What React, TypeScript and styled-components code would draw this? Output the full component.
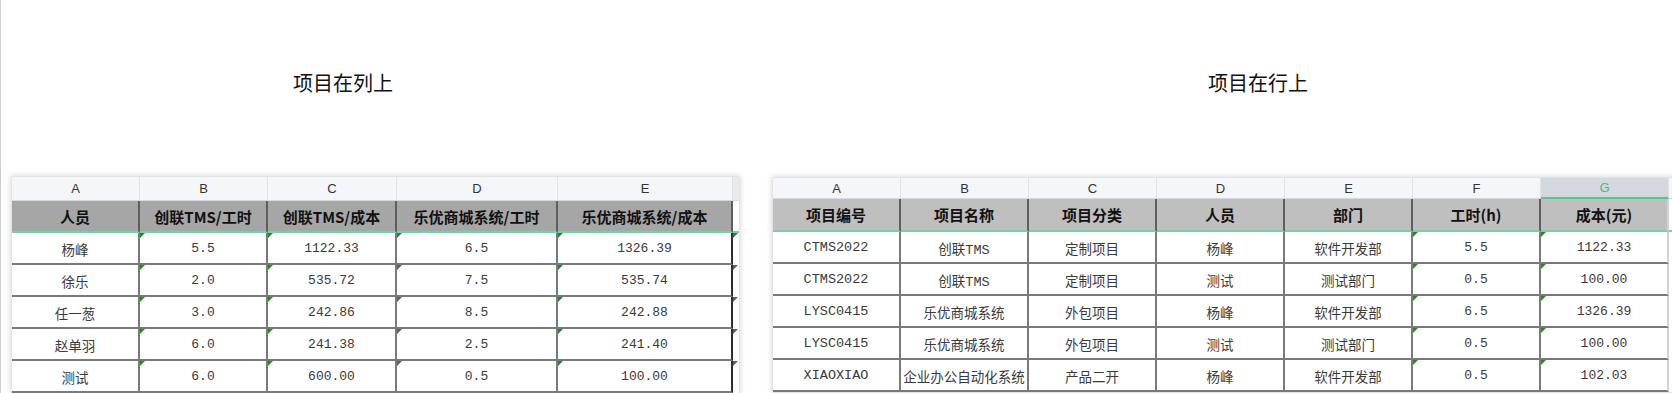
import React from 'react';
import styled, { createGlobalStyle, css } from 'styled-components';

const GlobalStyle = createGlobalStyle`
  html, body {
    margin: 0;
    padding: 0;
    background: #fff;
  }
  body {
    font-family: "Noto Sans CJK SC", "Noto Sans", sans-serif;
  }
`;

const Page = styled.div`
  display: flex;
  height: 393px;
  overflow: hidden;
  border-left: 1px solid #cfcfcf;
`;

const Section = styled.section<{ $width?: number }>`
  display: flex;
  flex-direction: column;
  flex: ${(p) => (p.$width ? `0 0 ${p.$width}px` : '1 1 auto')};
  min-width: 0;
`;

const Title = styled.h2<{ $indent: number }>`
  flex-shrink: 0;
  margin: 0;
  height: 176px;
  box-sizing: border-box;
  padding: 72px 0 0 ${(p) => p.$indent}px;
  font-size: 20px;
  line-height: 22px;
  font-weight: 400;
  color: #111;
`;

const Panel = styled.div<{ $left: number; $top: number }>`
  flex-shrink: 0;
  margin: ${(p) => p.$top}px 0 0 ${(p) => p.$left}px;
  align-self: flex-start;
  background: #fff;
  border: 1px solid #e3e3e3;
  border-radius: 2px;
  box-shadow: 0 0 5px 1px rgba(0, 0, 0, 0.13);
`;

const Sheet = styled.div<{ $cols: string }>`
  display: grid;
  grid-template-columns: ${(p) => p.$cols};
`;

const Letter = styled.div<{ $h: number; $active?: boolean; $blank?: boolean }>`
  height: ${(p) => p.$h}px;
  box-sizing: border-box;
  display: flex;
  align-items: center;
  justify-content: center;
  background: #f4f6f9;
  border-right: 1px solid #dfe2e7;
  border-bottom: 1px solid #d6d9de;
  font-family: "Liberation Sans", Arial, sans-serif;
  font-size: 13px;
  color: #333;
  ${(p) =>
    p.$active &&
    css`
      background: #d3d8df;
      color: #3cc184;
      border-bottom: 2px solid #4cc98e;
    `}
  ${(p) =>
    p.$blank &&
    css`
      background: #e9eaec;
      border-right: none;
    `}
`;

const Head = styled.div<{ $h: number; $bg: string; $blank?: boolean; $edge?: string }>`
  height: ${(p) => p.$h}px;
  box-sizing: border-box;
  display: flex;
  align-items: center;
  justify-content: center;
  background: ${(p) => (p.$blank ? '#fff' : p.$bg)};
  border-right: ${(p) => (p.$blank ? 'none' : `2px solid ${p.$edge ?? '#5e5e5e'}`)};
  border-bottom: 2px solid #72d3a6;
  font-size: 15px;
  font-weight: 700;
  color: #111;
  white-space: nowrap;
`;

const Cell = styled.div<{ $num?: boolean; $flag?: boolean; $blank?: boolean; $edge?: string }>`
  position: relative;
  height: 32px;
  box-sizing: border-box;
  display: flex;
  align-items: center;
  justify-content: center;
  padding-top: 1px;
  border-right: 2px solid ${(p) => p.$edge ?? '#7a7a7a'};
  border-bottom: 2px solid #7a7a7a;
  font-family: "Liberation Mono", "Noto Sans CJK SC", monospace;
  font-size: ${(p) => (p.$num ? '13px' : '13.5px')};
  color: #3a3a3a;
  white-space: nowrap;
  ${(p) =>
    p.$blank &&
    css`
      border-right: none;
      border-bottom: none;
    `}
  ${(p) =>
    p.$flag &&
    css`
      &::before {
        content: '';
        position: absolute;
        top: 0;
        left: 0;
        border-top: 5px solid #1c8f1c;
        border-right: 5px solid transparent;
      }
    `}
`;

const isNum = (v: string) => /^\d+\.\d+$/.test(v);

const leftCols = ['A', 'B', 'C', 'D', 'E'];
const leftHead = ['人员', '创联TMS/工时', '创联TMS/成本', '乐优商城系统/工时', '乐优商城系统/成本'];
const leftRows = [
  ['杨峰', '5.5', '1122.33', '6.5', '1326.39'],
  ['徐乐', '2.0', '535.72', '7.5', '535.74'],
  ['任一葱', '3.0', '242.86', '8.5', '242.88'],
  ['赵单羽', '6.0', '241.38', '2.5', '241.40'],
  ['测试', '6.0', '600.00', '0.5', '100.00'],
];

const rightCols = ['A', 'B', 'C', 'D', 'E', 'F', 'G'];
const rightHead = ['项目编号', '项目名称', '项目分类', '人员', '部门', '工时(h)', '成本(元)'];
const rightRows = [
  ['CTMS2022', '创联TMS', '定制项目', '杨峰', '软件开发部', '5.5', '1122.33'],
  ['CTMS2022', '创联TMS', '定制项目', '测试', '测试部门', '0.5', '100.00'],
  ['LYSC0415', '乐优商城系统', '外包项目', '杨峰', '软件开发部', '6.5', '1326.39'],
  ['LYSC0415', '乐优商城系统', '外包项目', '测试', '测试部门', '0.5', '100.00'],
  ['XIAOXIAO', '企业办公自动化系统', '产品二开', '杨峰', '软件开发部', '0.5', '102.03'],
];

function LeftSheet() {
  return (
    <Sheet $cols="128px 128px 129px 161px 175px 6px">
      {leftCols.map((c) => (
        <Letter key={c} $h={24}>{c}</Letter>
      ))}
      <Letter $h={24} $blank />
      {leftHead.map((h) => (
        <Head key={h} $h={32} $bg="#a6a6a6">{h}</Head>
      ))}
      <Head $h={32} $bg="#a6a6a6" $blank />
      {leftRows.map((row, r) => (
        <React.Fragment key={r}>
          {row.map((v, i) => (
            <Cell
              key={i}
              $num={isNum(v)}
              $flag={i > 0}
              $edge={i === row.length - 1 ? '#2e2e2e' : undefined}
            >
              {v}
            </Cell>
          ))}
          <Cell $blank $flag />
        </React.Fragment>
      ))}
    </Sheet>
  );
}

function RightSheet() {
  return (
    <Sheet $cols="repeat(7, 128px) 12px">
      {rightCols.map((c) => (
        <Letter key={c} $h={21} $active={c === 'G'}>{c}</Letter>
      ))}
      <Letter $h={21} />
      {rightHead.map((h, i) => (
        <Head key={h} $h={33} $bg="#bfbfbf" $edge={i === rightHead.length - 1 ? '#d4d4d4' : undefined}>
          {h}
        </Head>
      ))}
      <Head $h={33} $bg="#bfbfbf" $blank />
      {rightRows.map((row, r) => (
        <React.Fragment key={r}>
          {row.map((v, i) => (
            <Cell
              key={i}
              $num={isNum(v)}
              $flag={i >= 5}
              $edge={i === row.length - 1 ? '#d4d4d4' : undefined}
            >
              {v}
            </Cell>
          ))}
          <Cell $blank />
        </React.Fragment>
      ))}
    </Sheet>
  );
}

export default function App() {
  return (
    <>
      <GlobalStyle />
      <Page>
        <Section $width={755}>
          <Title $indent={292}>项目在列上</Title>
          <Panel $left={10} $top={0}>
            <LeftSheet />
          </Panel>
        </Section>
        <Section>
          <Title $indent={452}>项目在行上</Title>
          <Panel $left={16} $top={1}>
            <RightSheet />
          </Panel>
        </Section>
      </Page>
    </>
  );
}
